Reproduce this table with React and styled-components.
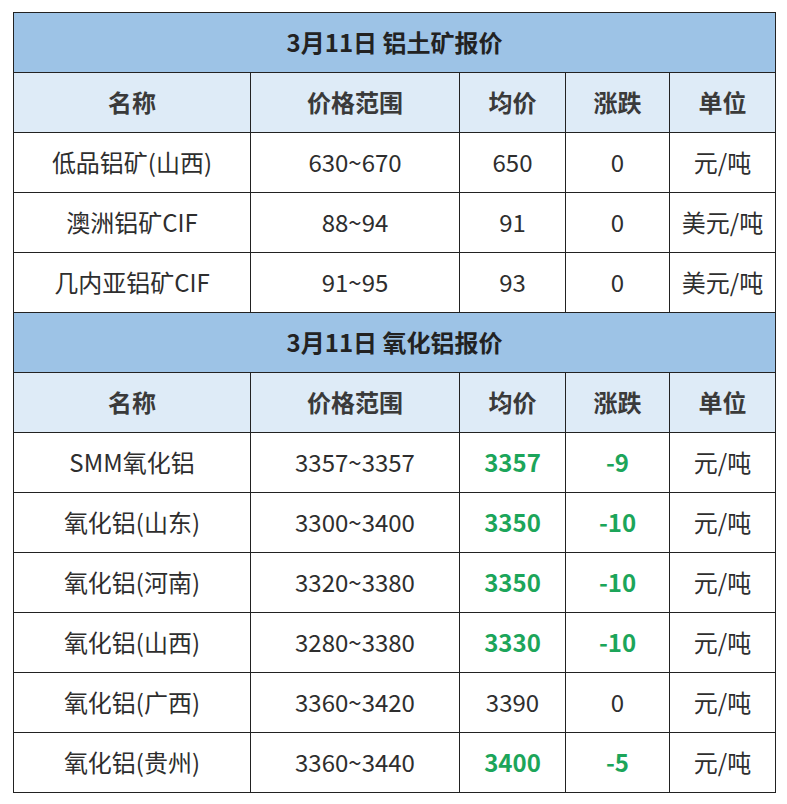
import React from 'react'
import styled, { createGlobalStyle } from 'styled-components'

const GlobalStyle = createGlobalStyle`
  html, body { margin: 0; padding: 0; background: #fff; }
  body { font-family: "Noto Sans CJK SC", "Noto Sans", sans-serif; }
`

const Page = styled.div`
  padding: 12px 12px 12px 13px;
`

const Table = styled.table`
  width: 762px;
  border-collapse: collapse;
  table-layout: fixed;
  color: #333;
`

const Col = styled.col`
  width: ${p => p.$w}px;
`

const TitleCell = styled.th`
  height: 59px;
  background: #9dc3e6;
  border: 1px solid #222;
  font-size: 24px;
  line-height: 1.2;
  font-weight: 700;
  color: #222;
  text-align: center;
  padding: 0;
`

const HeadCell = styled.th`
  height: 59px;
  background: #deebf7;
  border: 1px solid #222;
  font-size: 24px;
  line-height: 1.2;
  font-weight: 700;
  color: #3a3a3a;
  text-align: center;
  padding: 0;
`

const Cell = styled.td`
  height: 59px;
  border: 1px solid #222;
  font-size: 24px;
  line-height: 1.2;
  text-align: center;
  padding: 0;
  font-weight: ${p => (p.$green ? 700 : 400)};
  color: ${p => (p.$green ? '#1ca55a' : '#2e2e2e')};
`

const widths = [237, 209, 106, 104, 106]
const heads = ['名称', '价格范围', '均价', '涨跌', '单位']

const ore = [
  ['低品铝矿(山西)', '630~670', '650', '0', '元/吨'],
  ['澳洲铝矿CIF', '88~94', '91', '0', '美元/吨'],
  ['几内亚铝矿CIF', '91~95', '93', '0', '美元/吨'],
]

const alumina = [
  ['SMM氧化铝', '3357~3357', '3357', '-9', '元/吨'],
  ['氧化铝(山东)', '3300~3400', '3350', '-10', '元/吨'],
  ['氧化铝(河南)', '3320~3380', '3350', '-10', '元/吨'],
  ['氧化铝(山西)', '3280~3380', '3330', '-10', '元/吨'],
  ['氧化铝(广西)', '3360~3420', '3390', '0', '元/吨'],
  ['氧化铝(贵州)', '3360~3440', '3400', '-5', '元/吨'],
]

function Section({ title, rows }) {
  return (
    <>
      <tr>
        <TitleCell colSpan={5}>{title}</TitleCell>
      </tr>
      <tr>
        {heads.map(h => <HeadCell key={h}>{h}</HeadCell>)}
      </tr>
      {rows.map(r => {
        const green = r[3] !== '0'
        return (
          <tr key={r[0]}>
            <Cell>{r[0]}</Cell>
            <Cell>{r[1]}</Cell>
            <Cell $green={green}>{r[2]}</Cell>
            <Cell $green={green}>{r[3]}</Cell>
            <Cell>{r[4]}</Cell>
          </tr>
        )
      })}
    </>
  )
}

export default function App() {
  return (
    <Page>
      <GlobalStyle />
      <Table>
        <colgroup>
          {widths.map((w, i) => <Col key={i} $w={w} />)}
        </colgroup>
        <tbody>
          <Section title="3月11日 铝土矿报价" rows={ore} />
          <Section title="3月11日 氧化铝报价" rows={alumina} />
        </tbody>
      </Table>
    </Page>
  )
}
